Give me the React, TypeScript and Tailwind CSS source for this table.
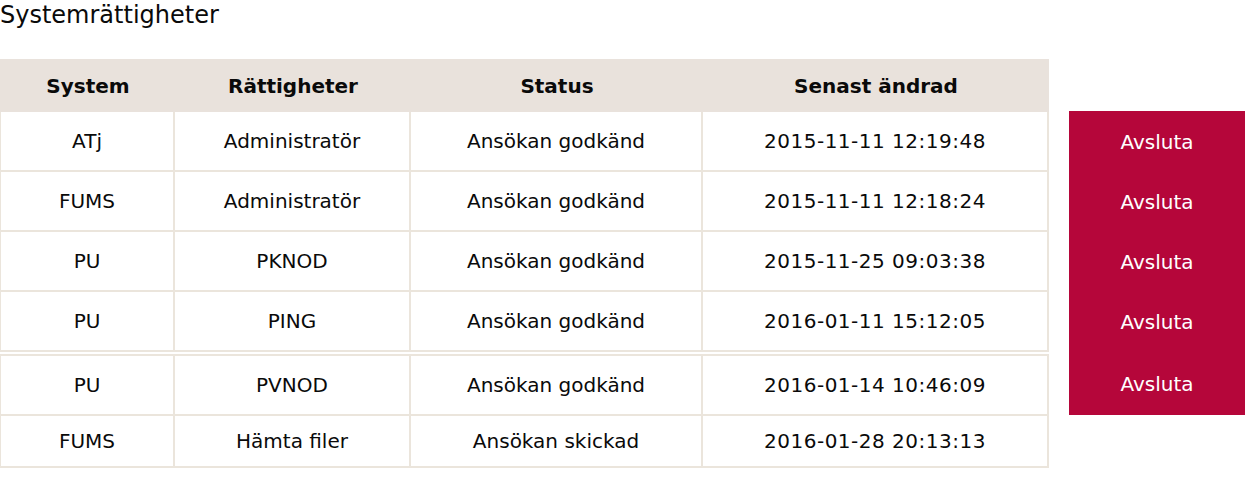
import React from 'react';

type Row = { system: string; right: string; status: string; changed: string; canEnd: boolean };

const rows: Row[] = [
  { system: 'ATj', right: 'Administratör', status: 'Ansökan godkänd', changed: '2015-11-11 12:19:48', canEnd: true },
  { system: 'FUMS', right: 'Administratör', status: 'Ansökan godkänd', changed: '2015-11-11 12:18:24', canEnd: true },
  { system: 'PU', right: 'PKNOD', status: 'Ansökan godkänd', changed: '2015-11-25 09:03:38', canEnd: true },
  { system: 'PU', right: 'PING', status: 'Ansökan godkänd', changed: '2016-01-11 15:12:05', canEnd: true },
  { system: 'PU', right: 'PVNOD', status: 'Ansökan godkänd', changed: '2016-01-14 10:46:09', canEnd: true },
  { system: 'FUMS', right: 'Hämta filer', status: 'Ansökan skickad', changed: '2016-01-28 20:13:13', canEnd: false },
];

const cols = 'grid grid-cols-[174px_236px_292px_346px]';
const cell = 'flex items-center justify-center border-r-2 border-[#ebe5dc]';

export default function App() {
  return (
    <div className="min-h-screen bg-white text-[#0a0a0a] font-['DejaVu_Sans',Verdana,sans-serif]">
      <h1 className="text-[24px] leading-[30px] font-normal">Systemrättigheter</h1>

      <div className="mt-[29px] w-[1249px]">
        <div className={`${cols} w-[1049px] pl-px h-[53px] bg-[#e9e2dc] text-[20px] font-bold`}>
          <div className="flex items-center justify-center">System</div>
          <div className="flex items-center justify-center">Rättigheter</div>
          <div className="flex items-center justify-center">Status</div>
          <div className="flex items-center justify-center">Senast ändrad</div>
        </div>

        {rows.map((r, i) => {
          const last = i === rows.length - 1;
          const split = i === 4;
          const h = last ? 'h-[52px]' : split ? 'h-[64px]' : 'h-[60px]';
          return (
            <div key={i} className={`flex ${h}`}>
              <div
                className={`${cols} w-[1049px] border-l border-b-2 border-[#ebe5dc] text-[20px] ${
                  split ? 'mt-[2px] border-t-2' : ''
                }`}
              >
                <div className={cell}>{r.system}</div>
                <div className={cell}>{r.right}</div>
                <div className={cell}>{r.status}</div>
                <div className={`${cell} tracking-[0.5px]`}>{r.changed}</div>
              </div>
              {r.canEnd && (
                <button
                  className={`ml-[20px] w-[176px] bg-[#b5063a] text-white text-[20px] ${
                    i === 0 ? '-mt-px h-[61px]' : split ? 'h-[63px]' : 'h-full'
                  }`}
                >
                  Avsluta
                </button>
              )}
            </div>
          );
        })}
      </div>
    </div>
  );
}
